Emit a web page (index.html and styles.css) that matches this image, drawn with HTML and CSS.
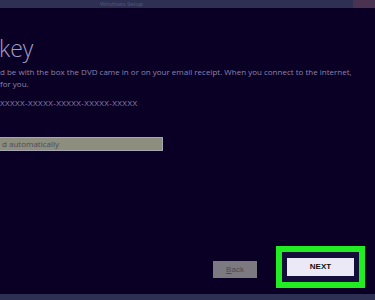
FILE: index.html
```html
<!DOCTYPE html>
<html lang="en">
<head>
  <meta charset="UTF-8">
  <title>Product key</title>
  <link rel="stylesheet" href="styles.css">
</head>
<body>
  <div class="screen">
    <div class="titlebar">
      <span class="title">Windows Setup</span>
      <span class="close"></span>
    </div>

    <div class="content">
      <h1 class="heading">key</h1>
      <p class="text">d be with the box the DVD came in or on your email receipt. When you connect to the internet,<br>for you.</p>
      <p class="format">XXXXX-XXXXX-XXXXX-XXXXX-XXXXX</p>
      <div class="field">d automatically</div>
    </div>

    <div class="actions">
      <button class="btn back"><u>B</u>ack</button>
      <div class="highlight">
        <button class="btn next">NEXT</button>
      </div>
    </div>

    <div class="footer"></div>
  </div>
</body>
</html>
```

FILE: styles.css
```css
html,
body {
  margin: 0;
  width: 375px;
  height: 300px;
  overflow: hidden;
  background: #0a0026;
  font-family: "Open Sans", "Liberation Sans", sans-serif;
}

.screen {
  height: 300px;
  display: flex;
  flex-direction: column;
  overflow: hidden;
  background: #0a0026;
}

.titlebar {
  height: 8px;
  background: #2d3052;
  display: flex;
  justify-content: space-between;
  align-items: center;
}

.title {
  margin-left: 100px;
  font-size: 6px;
  line-height: 8px;
  color: #55587a;
}

.close {
  width: 22px;
  height: 8px;
  background: #4a3350;
}

.content {
  padding-top: 26px;
  height: 205px;
  color: #8a84a8;
}

.heading {
  margin: 0 0 0 -1px;
  font-weight: 300;
  font-size: 23px;
  line-height: 28px;
  color: #a49ec0;
}

.text {
  margin: 4px 0 0 0;
  font-size: 8px;
  line-height: 12px;
  white-space: nowrap;
}

.format {
  margin: 7px 0 0 0;
  font-size: 8px;
  line-height: 12px;
  letter-spacing: 0.4px;
}

.field {
  margin-top: 28px;
  width: 160px;
  height: 12px;
  background: #8d8e7e;
  border: 1px solid #a6a6b6;
  border-left: none;
  font-size: 8px;
  line-height: 12px;
  color: #4c4a5a;
  padding-left: 2px;
}

.actions {
  height: 55px;
  display: flex;
  justify-content: flex-end;
  align-items: center;
  gap: 19px;
  padding-right: 10px;
}

.btn {
  border: none;
  font-family: "Liberation Sans", Arial, sans-serif;
  font-size: 8px;
  padding: 0;
}

.back {
  width: 44px;
  height: 17px;
  background: #7c7a80;
  color: #4a4a50;
  margin-top: 5px;
}

.highlight {
  border: 6px solid #22ec22;
  background: #130f3a;
  padding: 6px 5px;
}

.next {
  display: block;
  width: 67px;
  height: 18px;
  background: #ece9f6;
  color: #111111;
  font-weight: bold;
}

.footer {
  margin-top: auto;
  height: 6px;
  background: #2d3052;
}
```
